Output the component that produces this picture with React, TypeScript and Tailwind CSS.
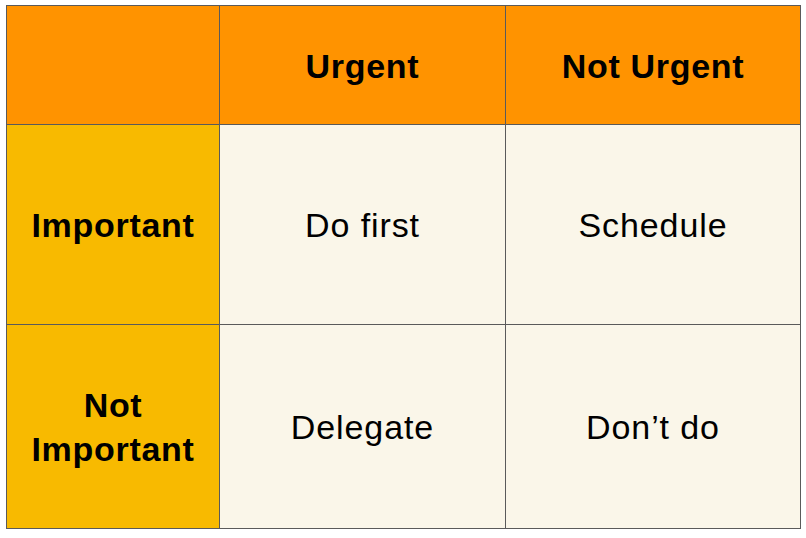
import React from 'react';

const rows = [
  { label: ['Important'], cells: ['Do first', 'Schedule'] },
  { label: ['Not', 'Important'], cells: ['Delegate', 'Don\u2019t do'] },
];

const App: React.FC = () => {
  return (
    <div className="w-[806px] h-[538px] bg-white pl-[6px] pt-[5px] font-['Liberation_Sans',Arial,sans-serif] text-black">
      {/* Priority matrix */}
      <div className="grid grid-cols-[212px_285px_294px] grid-rows-[118px_199px_203px] gap-px bg-[#5a5a5a] border border-[#5a5a5a] w-[795px]">
        <div className="bg-[#ff9300]" />
        <div className="bg-[#ff9300] flex items-center justify-center pt-[2px] text-[34px] font-bold tracking-[0.7px]">Urgent</div>
        <div className="bg-[#ff9300] flex items-center justify-center pt-[2px] text-[34px] font-bold tracking-[0.7px]">Not Urgent</div>
        {rows.map((row) => (
          <React.Fragment key={row.label.join(' ')}>
            <div className="bg-[#f8ba00] flex flex-col items-center justify-center pt-[1px] text-[34px] font-bold leading-[44px] tracking-[0.7px]">
              {row.label.map((l) => (
                <span key={l}>{l}</span>
              ))}
            </div>
            {row.cells.map((c) => (
              <div key={c} className="bg-[#faf6e9] flex items-center justify-center pt-[1px] text-[34px] tracking-[0.9px]">
                {c}
              </div>
            ))}
          </React.Fragment>
        ))}
      </div>
    </div>
  );
};

export default App;
